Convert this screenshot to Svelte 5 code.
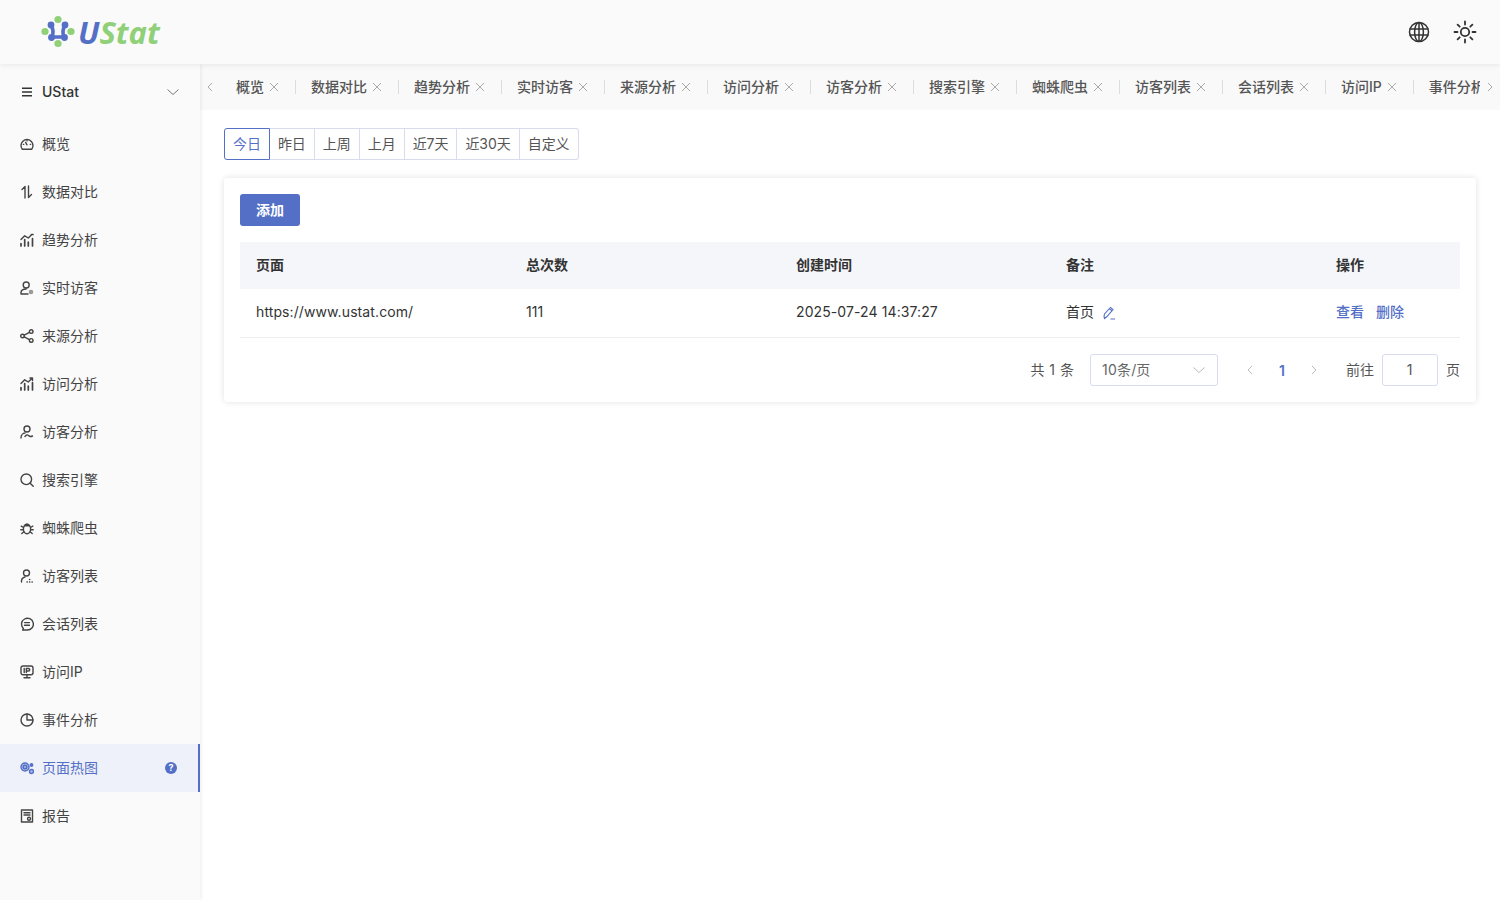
<script>
	const menu = [
		{ label: '概览', icon: 'gauge' },
		{ label: '数据对比', icon: 'compare' },
		{ label: '趋势分析', icon: 'trend' },
		{ label: '实时访客', icon: 'userLive' },
		{ label: '来源分析', icon: 'share' },
		{ label: '访问分析', icon: 'trendUp' },
		{ label: '访客分析', icon: 'userWave' },
		{ label: '搜索引擎', icon: 'search' },
		{ label: '蜘蛛爬虫', icon: 'bug' },
		{ label: '访客列表', icon: 'userList' },
		{ label: '会话列表', icon: 'chat' },
		{ label: '访问IP', icon: 'ip' },
		{ label: '事件分析', icon: 'pie' },
		{ label: '页面热图', icon: 'heat', active: true, help: true },
		{ label: '报告', icon: 'report' }
	];
	const tabs = ['概览', '数据对比', '趋势分析', '实时访客', '来源分析', '访问分析', '访客分析', '搜索引擎', '蜘蛛爬虫', '访客列表', '会话列表', '访问IP', '事件分析'];
	const ranges = ['今日', '昨日', '上周', '上月', '近7天', '近30天', '自定义'];
	const columns = ['页面', '总次数', '创建时间', '备注', '操作'];
</script>

<div class="page">
	<header class="topbar">
		<div class="logo">
			<svg class="logo-mark" width="36" height="34" viewBox="0 0 36 34">
				<g fill="#8fd078">
					<circle cx="18" cy="4.500" r="3.600" />
					<circle cx="5" cy="16.500" r="3.600" />
					<circle cx="31" cy="16.500" r="3.600" />
					<circle cx="18" cy="28.500" r="3.600" />
				</g>
				<g fill="none" stroke="#5470c6" stroke-width="3.600" stroke-linecap="round" stroke-linejoin="round">
					<path d="M11 10.500 Q14.500 16 12 22 H24 Q21.500 16 25 10.500" />
				</g>
				<g fill="#5470c6">
					<circle cx="11" cy="10" r="3.400" />
					<circle cx="25" cy="10" r="3.400" />
					<circle cx="11.500" cy="22.500" r="3.400" />
					<circle cx="24.500" cy="22.500" r="3.400" />
				</g>
			</svg>
			<span class="logo-text"><span class="logo-u">U</span><span class="logo-rest">Stat</span></span>
		</div>
		<div class="top-actions">
			<svg width="24" height="24" viewBox="0 0 24 24" fill="none" stroke="#333" stroke-width="1.500">
				<circle cx="12" cy="12" r="9.500" />
				<ellipse cx="12" cy="12" rx="4.400" ry="9.500" />
				<path d="M12 2.500v19M2.500 9h19M2.500 15h19" />
			</svg>
			<svg width="24" height="24" viewBox="0 0 24 24" fill="none" stroke="#333" stroke-width="1.800" stroke-linecap="round">
				<circle cx="12" cy="12" r="4.200" />
				<path d="M12 1.500v3M12 19.500v3M1.500 12h3M19.500 12h3M4.600 4.600l2.100 2.100M17.300 17.300l2.100 2.100M4.600 19.400l2.100-2.100M17.300 6.700l2.100-2.100" />
			</svg>
		</div>
	</header>

	<div class="body">
		<aside class="sidebar">
			<div class="site">
				<svg width="12" height="12" viewBox="0 0 12 12" fill="none" stroke="#333" stroke-width="1.400">
					<path d="M1 2.200h10M1 6h10M1 9.800h10" />
				</svg>
				<span class="site-name">UStat</span>
				<svg class="site-caret" width="14" height="14" viewBox="0 0 14 14" fill="none" stroke="#777" stroke-width="1">
					<path d="M1.500 4.500 7 9.500l5.500-5" />
				</svg>
			</div>
			<nav class="nav">
				{#each menu as item}
					<div class="nav-item" class:active={item.active}>
						<svg class="nav-icon" width="14" height="14" viewBox="0 0 14 14" fill="none" stroke="currentColor" stroke-width="1.400" stroke-linecap="round" stroke-linejoin="round">
							{#if item.icon === 'gauge'}
								<path d="M2.300 12.300h9.400a6 6 0 1 0-9.400 0Z" /><path d="M7 7.800 5.600 5.400M3.400 7.400h.3M10.300 7.400h.3M7 3.600v.3" />
							{:else if item.icon === 'compare'}
								<path d="M5 13V1.500L2 4.500M8.500 1v11.500l3-3" />
							{:else if item.icon === 'trend'}
								<path d="M1 13v-2.500M4.700 13V6.500M8.300 13V9M12.500 13V5.500" stroke-width="1.700" /><path d="M1 6.500 4.700 2.800 8.300 5l3-3" /><path d="M11.500 1.500h1.500" stroke-width="1.700" />
							{:else if item.icon === 'trendUp'}
								<path d="M1 13v-2.500M4.700 13V6.500M8.300 13V9M12.500 13V5.500" stroke-width="1.700" /><path d="M1 6.500 4.700 2.800 8.300 5l4-4M10 1h2.500v2.500" />
							{:else if item.icon === 'userLive'}
								<circle cx="6.200" cy="4" r="3" /><path d="M1 13v-1.200c0-2.400 2-3.800 5.200-3.800M1 13h7" /><circle cx="11" cy="11" r="1.600" fill="#999" stroke="#999" />
							{:else if item.icon === 'share'}
								<circle cx="2.500" cy="7" r="1.800" /><circle cx="11.200" cy="2.600" r="1.800" /><circle cx="11.200" cy="11.400" r="1.800" /><path d="M4.200 6.200 9.500 3.400M4.200 7.800l5.300 2.800" />
							{:else if item.icon === 'userWave'}
								<circle cx="7" cy="4" r="3" /><path d="M1 13c0-3 2-5 4-5M5 11.500c1.500-2 2.500-2 3.500-1s2 1.500 4 .5" />
							{:else if item.icon === 'search'}
								<circle cx="6.300" cy="6.300" r="5.300" /><path d="m10.200 10.200 3 3" />
							{:else if item.icon === 'bug'}
								<ellipse cx="7" cy="8" rx="3.600" ry="4.800" /><path d="M4.500 4.800a2.800 2.800 0 0 1 5 0ZM3.500 6.500 1.200 5.200M10.500 6.500l2.300-1.300M3.300 8.800H.8M10.700 8.800h2.500M3.900 10.800 1.800 12.500M10.100 10.800l2.100 1.700" />
							{:else if item.icon === 'userList'}
								<circle cx="6.500" cy="4" r="3" /><path d="M1.500 13v-1c0-2 1.500-3.500 3.500-4M7 13h.3M9.500 13h.3M12 13h.3M9.500 10.500h.3" />
							{:else if item.icon === 'chat'}
								<path d="M2.600 13 3.400 11.400A5.900 5.900 0 1 1 7 13Z" /><path d="M4.500 5.600h5M4.500 8.200h5" />
							{:else if item.icon === 'ip'}
								<rect x="1" y="1" width="12" height="8.800" rx="2" /><path d="M4.200 3.500v4M6.300 7.500v-4h2.200a1.200 1.200 0 0 1 0 2.500H6.300M7 9.800v2.700M4 12.800h6" />
							{:else if item.icon === 'pie'}
								<circle cx="7" cy="7" r="6" /><path d="M7 1v6h6" />
							{:else if item.icon === 'heat'}
								<circle cx="5" cy="6" r="4" fill="#a9b9e6" /><circle cx="5" cy="6" r="1.800" /><circle cx="11.500" cy="4" r="1.200" fill="currentColor" /><circle cx="11.500" cy="10.500" r="2" fill="#a9b9e6" />
							{:else if item.icon === 'report'}
								<rect x="1.500" y="1" width="11" height="12" /><path d="M4 3.800h6M4 6h6" /><circle cx="9" cy="9.800" r="1.500" />
							{/if}
						</svg>
						<span class="nav-label">{item.label}</span>
						{#if item.help}
							<span class="help">?</span>
						{/if}
					</div>
				{/each}
			</nav>
		</aside>

		<main class="main">
			<div class="tabbar">
				<svg class="tab-arrow" width="10" height="10" viewBox="0 0 10 10" fill="none" stroke="#aaa" stroke-width="1">
					<path d="M7 1 3 5l4 4" />
				</svg>
				<div class="tab-scroll">
					{#each tabs as tab}
						<div class="tab">
							<span class="tab-label">{tab}</span>
							<svg class="tab-close" width="10" height="10" viewBox="0 0 10 10" fill="none" stroke="#aaa" stroke-width="1">
								<path d="m1 1 8 8M9 1 1 9" />
							</svg>
						</div>
					{/each}
				</div>
				<svg class="tab-arrow" width="10" height="10" viewBox="0 0 10 10" fill="none" stroke="#aaa" stroke-width="1">
					<path d="m3 1 4 4-4 4" />
				</svg>
			</div>

			<div class="content">
				<div class="ranges">
					{#each ranges as range, i}
						<button class="range" class:selected={i === 0}>{range}</button>
					{/each}
				</div>

				<section class="card">
					<button class="add">添加</button>
					<div class="table">
						<div class="row head">
							{#each columns as col}
								<div class="cell">{col}</div>
							{/each}
						</div>
						<div class="row">
							<div class="cell latin">https://www.ustat.com/</div>
							<div class="cell">111</div>
							<div class="cell latin">2025-07-24 14:37:27</div>
							<div class="cell note">
								首页
								<svg width="14" height="14" viewBox="0 0 14 14" fill="none" stroke="#5470c6" stroke-width="1.100">
									<path d="M2 10.500 2.500 8 8.500 1.500 11 3.500 5 10.500 2.500 12.500ZM7.500 2.800l2.500 2M8.500 13H13" />
								</svg>
							</div>
							<div class="cell actions"><span>查看</span><span>删除</span></div>
						</div>
					</div>
					<div class="pager">
						<span class="total">共 1 条</span>
						<div class="size">
							<span class="size-label">10条/页</span>
							<svg width="14" height="14" viewBox="0 0 14 14" fill="none" stroke="#bbb" stroke-width="1">
								<path d="M1.500 4.500 7 9.500l5.500-5" />
							</svg>
						</div>
						<div class="pages">
							<svg width="10" height="10" viewBox="0 0 10 10" fill="none" stroke="#bbb" stroke-width="1"><path d="M7 1 3 5l4 4" /></svg>
							<span class="current">1</span>
							<svg width="10" height="10" viewBox="0 0 10 10" fill="none" stroke="#bbb" stroke-width="1"><path d="m3 1 4 4-4 4" /></svg>
						</div>
						<span class="goto">前往</span>
						<div class="jump">1</div>
						<span class="unit">页</span>
					</div>
				</section>
			</div>
		</main>
	</div>
</div>

<style>
	:global(body) {
		margin: 0;
		background: #fff;
		font-family: Inter, "Noto Sans CJK SC", sans-serif;
		font-size: 14px;
		color: #333;
	}

	.page {
		height: 900px;
		overflow: hidden;
		display: flex;
		flex-direction: column;
	}

	.topbar {
		height: 64px;
		flex: none;
		display: flex;
		align-items: center;
		justify-content: space-between;
		background: #fafafa;
		box-shadow: 0 1px 6px rgba(0, 0, 0, 0.08);
		position: relative;
		z-index: 2;
	}

	.logo {
		display: flex;
		align-items: center;
		margin-left: 40px;
		gap: 2px;
	}

	.logo-text {
		font-family: "Open Sans", sans-serif;
		font-size: 31px;
		font-weight: 700;
		font-style: italic;
		line-height: 1;
	}

	.logo-u {
		color: #5470c6;
	}

	.logo-rest {
		color: #8fd078;
	}

	.top-actions {
		display: flex;
		gap: 22px;
		margin-right: 23px;
	}

	.body {
		flex: 1;
		display: flex;
		min-height: 0;
	}

	.sidebar {
		width: 200px;
		flex: none;
		background: #fafafa;
		box-shadow: 1px 0 4px rgba(0, 0, 0, 0.08);
		position: relative;
		z-index: 1;
		padding-top: 4px;
		box-sizing: border-box;
	}

	.site {
		height: 48px;
		display: flex;
		align-items: center;
		padding: 0 20px 0 21px;
		gap: 9px;
	}

	.site-name {
		font-weight: 500;
		flex: 1;
		color: #333;
		padding-bottom: 2px;
	}

	.site-caret {
		flex: none;
	}

	.nav {
		margin-top: 4px;
	}

	.nav-item {
		height: 48px;
		display: flex;
		align-items: center;
		padding: 0 21px 0 20px;
		gap: 8px;
		color: #444;
		box-sizing: border-box;
	}

	.nav-item.active {
		background: #eef1fa;
		color: #5470c6;
		border-right: 2px solid #5470c6;
	}

	.nav-icon {
		flex: none;
	}

	.nav-label {
		flex: 1;
		padding-bottom: 2px;
	}

	.help {
		width: 12px;
		height: 12px;
		border-radius: 50%;
		background: #5470c6;
		color: #fff;
		font-size: 9px;
		font-weight: 700;
		line-height: 12px;
		text-align: center;
	}

	.main {
		flex: 1;
		min-width: 0;
		display: flex;
		flex-direction: column;
	}

	.tabbar {
		height: 46px;
		flex: none;
		display: flex;
		align-items: center;
		background: #f9f9fa;
		padding: 0 5px;
		box-sizing: border-box;
	}

	.tab-arrow {
		flex: none;
	}

	.tab-scroll {
		flex: 1;
		min-width: 0;
		display: flex;
		overflow: hidden;
		margin: 0 5px 0 5px;
	}

	.tab {
		flex: none;
		display: flex;
		align-items: center;
		gap: 5px;
		padding: 0 16px;
		position: relative;
	}

	.tab::after {
		content: "";
		position: absolute;
		right: -1px;
		top: 3px;
		height: 14px;
		width: 1px;
		background: #ddd;
	}

	.tab-label {
		font-weight: 500;
		color: #555;
		line-height: 20px;
		white-space: nowrap;
	}

	.content {
		flex: 1;
		padding: 18px 24px;
	}

	.ranges {
		display: flex;
		height: 32px;
	}

	.range {
		font: inherit;
		letter-spacing: -0.05px;
		padding: 0 8px;
		background: #fff;
		border: 1px solid #d9dcec;
		border-left-width: 0;
		color: #555;
		line-height: 30px;
		height: 32px;
	}

	.range:first-child {
		border-left-width: 1px;
		border-radius: 3px 0 0 3px;
	}

	.range:last-child {
		border-radius: 0 3px 3px 0;
	}

	.range.selected {
		border-color: #5470c6;
		color: #5470c6;
	}

	.card {
		margin-top: 18px;
		padding: 16px;
		border-radius: 3px;
		background: #fff;
		box-shadow: 0 0 6px rgba(0, 0, 0, 0.12);
	}

	.add {
		display: block;
		width: 60px;
		height: 32px;
		padding: 0 0 2px;
		border: 0;
		border-radius: 3px;
		background: #5470c6;
		color: #fff;
		font: inherit;
		font-weight: 600;
	}

	.table {
		margin-top: 16px;
	}

	.row {
		display: grid;
		grid-template-columns: 270px 270px 270px 270px 140px;
		height: 49px;
		border-bottom: 1px solid #eee;
		box-sizing: border-box;
		align-items: center;
	}

	.row.head {
		height: 47px;
		background: #f5f6fa;
		border-bottom: 0;
		font-weight: 600;
	}

	.cell {
		padding-left: 16px;
		padding-bottom: 4px;
		white-space: nowrap;
	}

	.latin {
		letter-spacing: 0.1px;
	}

	.note {
		display: flex;
		align-items: center;
		gap: 8px;
	}

	.note svg {
		position: relative;
		top: 2px;
	}

	.actions {
		display: flex;
		gap: 12px;
		color: #5470c6;
		font-weight: 500;
	}

	.pager {
		margin-top: 16px;
		display: flex;
		align-items: center;
		justify-content: flex-end;
		height: 32px;
		color: #555;
	}

	.total {
		word-spacing: 1px;
		padding-bottom: 2px;
	}

	.size {
		width: 128px;
		height: 32px;
		margin-left: 16px;
		border: 1px solid #d9dcec;
		border-radius: 3px;
		box-sizing: border-box;
		display: flex;
		align-items: center;
		justify-content: space-between;
		padding: 0 11px;
		color: #666;
	}

	.size-label {
		letter-spacing: 0.2px;
		padding-bottom: 2px;
	}

	.pages {
		display: flex;
		align-items: center;
		justify-content: space-between;
		width: 74px;
		margin: 0 27px;
	}

	.current {
		color: #5470c6;
		font-weight: 600;
	}

	.goto,
	.unit {
		padding-bottom: 2px;
	}

	.jump {
		width: 56px;
		height: 32px;
		margin: 0 8px;
		padding-right: 1px;
		border: 1px solid #d9dcec;
		border-radius: 3px;
		box-sizing: border-box;
		text-align: center;
		line-height: 30px;
	}
</style>
